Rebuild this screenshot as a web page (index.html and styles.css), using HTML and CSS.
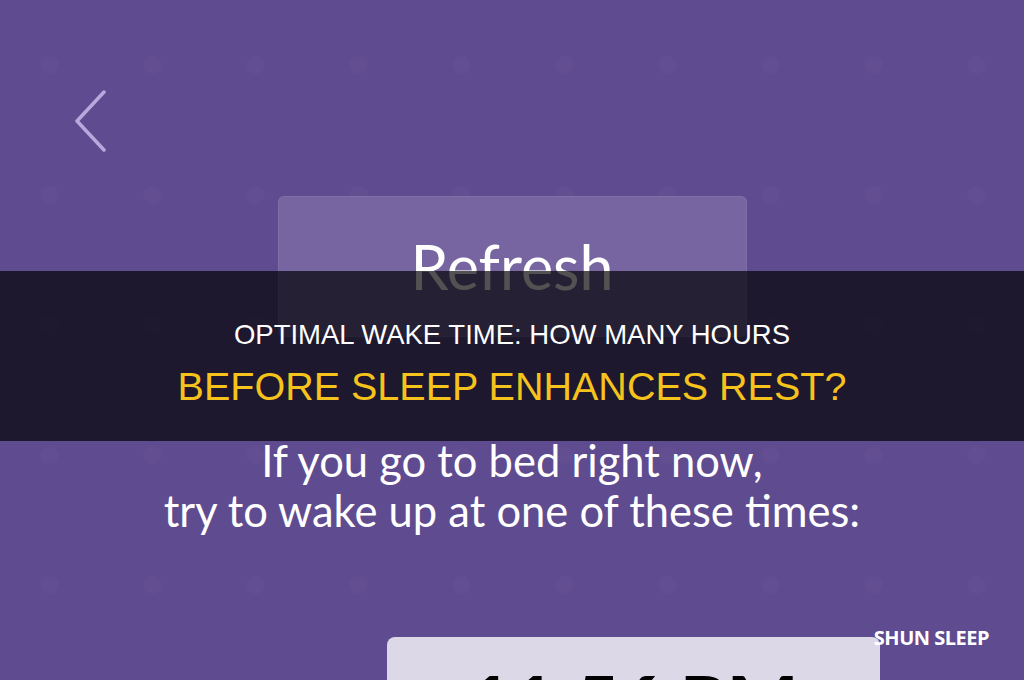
FILE: index.html
```html
<!DOCTYPE html>
<html lang="en">
<head>
    <meta charset="UTF-8">
    <meta name="viewport" content="width=device-width, initial-scale=1.0">
    <title>Sleep Calculator</title>
    <link rel="stylesheet" href="styles.css">
</head>
<body>
    <div class="screen">
        <div class="topbar">
            <a class="back" href="#" aria-label="Back">
                <svg width="34" height="62" viewBox="0 0 34 62">
                    <path d="M30 2 L3 31 L30 60" fill="none" stroke="#b8a8de" stroke-width="3.5" stroke-linecap="round" stroke-linejoin="round"/>
                </svg>
            </a>
        </div>

        <button class="refresh">Refresh</button>

        <p class="prompt">If you go to bed right now,<br>try to wake up at one of these times:</p>

        <div class="time-card">
            <span class="time">11:56 PM</span>
        </div>

        <!-- article title strip over the screenshot -->
        <div class="banner">
            <h1 class="title-top">OPTIMAL WAKE TIME: HOW MANY HOURS</h1>
            <h2 class="title-bottom">BEFORE SLEEP ENHANCES REST?</h2>
        </div>

        <div class="brand">SHUN SLEEP</div>
    </div>
</body>
</html>
```

FILE: styles.css
```css
* {
    margin: 0;
    padding: 0;
    box-sizing: border-box;
}

body {
    background: #5f4b8f;
    font-family: 'Lato', sans-serif;
}

.screen {
    position: relative;
    height: 680px;
    overflow: hidden;
    background-color: #5f4b8f;
    /* faint night-sky marks behind everything */
    background-image: radial-gradient(circle, rgba(255, 255, 255, 0.015) 0 8px, transparent 10px);
    background-size: 103px 130px;
    background-position: -2px 0;
}

.topbar {
    height: 196px;
    padding: 90px 0 0 74px;
}

.back {
    display: inline-block;
}

.refresh {
    display: flex;
    align-items: center;
    justify-content: center;
    width: 469px;
    height: 141px;
    margin: 0 auto;
    background: #7765a1;
    border: 1px solid rgba(255, 255, 255, 0.07);
    border-radius: 6px;
    color: #fff;
    font-family: 'Lato', sans-serif;
    font-size: 61px;
    cursor: pointer;
}

.prompt {
    margin-top: 98px;
    text-align: center;
    color: #fff;
    font-size: 43.5px;
    line-height: 50px;
}

.time-card {
    width: 493px;
    height: 120px;
    margin: 102px 0 0 387px;
    padding-top: 19px;
    background: #dcd8e7;
    border-radius: 8px;
    text-align: center;
}

.time {
    color: #000;
    font-size: 75px;
    font-weight: 900;
    line-height: 1.2;
}

.banner {
    position: absolute;
    left: 0;
    right: 0;
    top: 271px;
    height: 170px;
    background: rgba(0, 0, 0, 0.68);
    text-align: center;
    font-family: 'Liberation Sans', Arial, sans-serif;
}

.title-top {
    margin-top: 48px;
    color: #fff;
    font-size: 27.5px;
    font-weight: 400;
    line-height: 32px;
}

.title-bottom {
    margin-top: 13px;
    color: #f6c21c;
    font-size: 39.5px;
    font-weight: 400;
    line-height: 45px;
}

.brand {
    position: absolute;
    top: 624px;
    right: 35px;
    color: #fff;
    font-family: 'Open Sans', sans-serif;
    font-size: 20px;
    font-weight: 700;
    letter-spacing: -0.5px;
}
```
